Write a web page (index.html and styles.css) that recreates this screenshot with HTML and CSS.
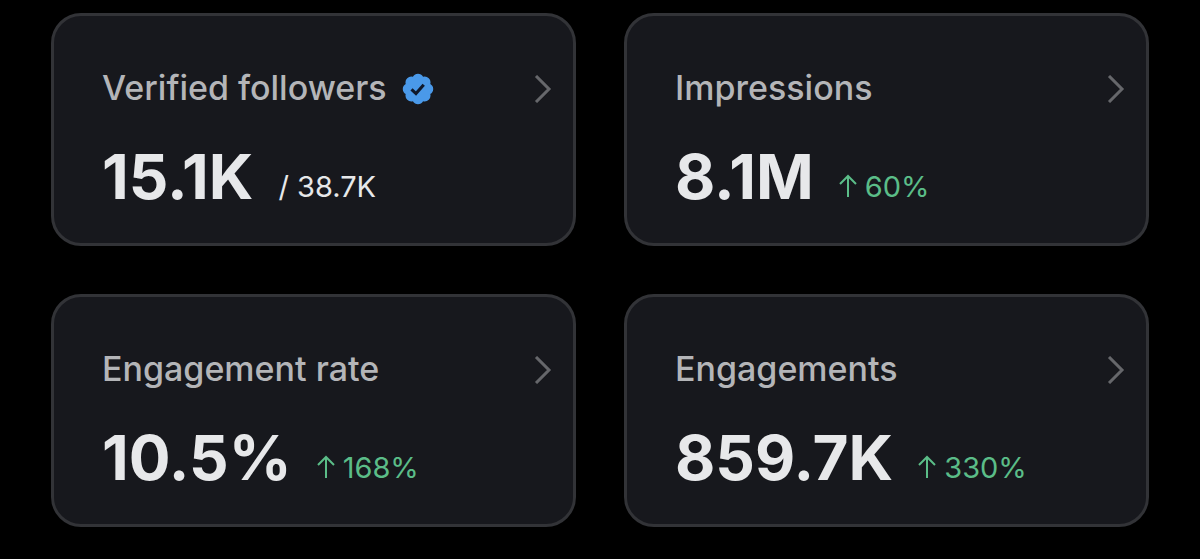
FILE: index.html
```html
<!DOCTYPE html>
<html lang="en">

<head>
    <meta charset="UTF-8">
    <meta name="viewport" content="width=device-width, initial-scale=1.0">
    <title>Account Analytics</title>
    <link rel="stylesheet" href="styles.css">
</head>

<body>
    <main class="stats">
        <a class="card" href="#followers">
            <h2 class="card-title">
                <span>Verified followers</span>
                <svg class="badge" viewBox="0 0 22 22" aria-hidden="true">
                    <path fill="#4a99e9" d="M18.95 7.71A3.8 3.8 0 0 1 18.95 14.29A3.8 3.8 0 0 1 14.29 18.95A3.8 3.8 0 0 1 7.71 18.95A3.8 3.8 0 0 1 3.05 14.29A3.8 3.8 0 0 1 3.05 7.71A3.8 3.8 0 0 1 7.71 3.05A3.8 3.8 0 0 1 14.29 3.05A3.8 3.8 0 0 1 18.95 7.71z"/>
                    <path class="badge-check" d="M6.8 11.2l2.9 2.8 5-5.7"/>
                </svg>
            </h2>
            <svg class="chevron" viewBox="0 0 18 28" aria-hidden="true"><path d="M2 1l13 13L2 27"/></svg>
            <p class="card-data">
                <strong class="value">15.1K</strong>
                <span class="total">/ 38.7K</span>
            </p>
        </a>

        <a class="card" href="#impressions">
            <h2 class="card-title">Impressions</h2>
            <svg class="chevron" viewBox="0 0 18 28" aria-hidden="true"><path d="M2 1l13 13L2 27"/></svg>
            <p class="card-data">
                <strong class="value">8.1M</strong>
                <span class="change"><svg class="arrow" viewBox="0 0 18 24" aria-hidden="true"><path d="M9 24V3M1 11l8-8 8 8"/></svg>60%</span>
            </p>
        </a>

        <a class="card" href="#engagement-rate">
            <h2 class="card-title">Engagement rate</h2>
            <svg class="chevron" viewBox="0 0 18 28" aria-hidden="true"><path d="M2 1l13 13L2 27"/></svg>
            <p class="card-data">
                <strong class="value">10.5%</strong>
                <span class="change"><svg class="arrow" viewBox="0 0 18 24" aria-hidden="true"><path d="M9 24V3M1 11l8-8 8 8"/></svg>168%</span>
            </p>
        </a>

        <a class="card" href="#engagements">
            <h2 class="card-title">Engagements</h2>
            <svg class="chevron" viewBox="0 0 18 28" aria-hidden="true"><path d="M2 1l13 13L2 27"/></svg>
            <p class="card-data">
                <strong class="value">859.7K</strong>
                <span class="change"><svg class="arrow" viewBox="0 0 18 24" aria-hidden="true"><path d="M9 24V3M1 11l8-8 8 8"/></svg>330%</span>
            </p>
        </a>
    </main>
</body>

</html>
```
FILE: styles.css
```css
body {
    margin: 0;
    background-color: #000;
    color: #e7e8ea;
    font-family: Inter, "Liberation Sans", sans-serif;
}

.stats {
    display: grid;
    grid-template-columns: 1fr 1fr;
    gap: 48px;
    padding: 13px 51px 32px;
}

.card {
    display: grid;
    grid-template-columns: 1fr auto;
    grid-template-rows: 50px auto;
    align-items: center;
    row-gap: 28px;
    padding: 48px 21px 31px 48px;
    border: 3px solid #323337;
    border-radius: 30px;
    background-color: #17181d;
    color: inherit;
    text-decoration: none;
}

.card-title {
    display: flex;
    align-items: center;
    align-self: start;
    gap: 14px;
    margin: 0;
    color: #b4b5b8;
    font-size: 34px;
    font-weight: 500;
    line-height: 48px;
}

.badge {
    width: 34px;
    height: 34px;
    margin-top: 2px;
}

.badge-check {
    fill: none;
    stroke: #10192b;
    stroke-width: 2;
}

.chevron {
    width: 18px;
    height: 28px;
    fill: none;
    stroke: #66676b;
    stroke-width: 3;
}

.card-data {
    display: flex;
    grid-column: 1 / -1;
    align-items: flex-end;
    gap: 25px;
    margin: 0;
}

.value {
    font-size: 62px;
    font-weight: 700;
    line-height: 70px;
}

.total,
.change {
    font-size: 29px;
    line-height: 50px;
}

.change {
    color: #5bbd88;
}

.arrow {
    width: 18px;
    height: 24px;
    margin-right: 8px;
    fill: none;
    stroke: currentColor;
    stroke-width: 2;
}
```
